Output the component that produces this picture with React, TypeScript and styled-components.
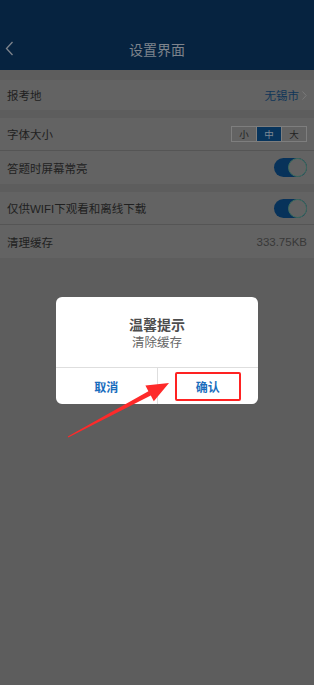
import React from 'react';
import styled, { createGlobalStyle } from 'styled-components';

const GlobalStyle = createGlobalStyle`
    html, body {
        margin: 0;
        padding: 0;
        background: #5d5d5d;
        font-family: "Liberation Sans", "Noto Sans CJK SC", sans-serif;
    }
`;

const Page = styled.div`
    position: relative;
    width: 314px;
    height: 685px;
    overflow: hidden;
    background: #5d5d5d;
`;

const Header = styled.div`
    height: 70px;
    background: #062340;
    display: flex;
    align-items: flex-end;
    justify-content: center;
    position: relative;
    box-sizing: border-box;
    padding-bottom: 12px;
`;

const Title = styled.div`
    color: #7e848c;
    font-size: 14px;
    line-height: 16px;
`;

const Back = styled.svg`
    position: absolute;
    left: 5px;
    bottom: 14px;
`;

const Group = styled.div<{ top: number }>`
    margin-top: ${p => p.top}px;
    background: #636363;
`;

const Row = styled.div<{ h?: number; last?: boolean }>`
    height: ${p => p.h ?? 33}px;
    box-sizing: border-box;
    display: flex;
    align-items: center;
    justify-content: space-between;
    padding: 0 7px;
    border-bottom: ${p => (p.last ? 'none' : '1px solid #555')};
    font-size: 11.5px;
    color: #1f1f1f;
`;

const Value = styled.span<{ blue?: boolean }>`
    color: ${p => (p.blue ? '#0f3558' : '#383838')};
    display: flex;
    align-items: center;
    gap: 3px;
    font-size: 11.5px;
`;

const Segments = styled.div`
    display: flex;
    border: 1px solid #7e7e7e;
    height: 16px;
    box-sizing: border-box;
`;

const Segment = styled.div<{ active?: boolean }>`
    width: 24px;
    display: flex;
    align-items: center;
    justify-content: center;
    font-size: 9.5px;
    color: ${p => (p.active ? '#7e8994' : '#222')};
    background: ${p => (p.active ? '#07345c' : 'transparent')};
    & + & {
        border-left: 1px solid #7e7e7e;
    }
`;

const Toggle = styled.div`
    width: 33px;
    height: 19px;
    border-radius: 10px;
    background: #07325a;
    position: relative;
    &::after {
        content: '';
        position: absolute;
        right: 0;
        top: 0;
        width: 17px;
        height: 17px;
        border-radius: 50%;
        background: #636363;
        border: 1px solid #3e6b5c;
    }
`;

const Overlay = styled.div`
    position: absolute;
    inset: 0;
    display: flex;
    justify-content: center;
    padding-top: 297px;
    box-sizing: border-box;
`;

const Dialog = styled.div`
    width: 202px;
    height: 107px;
    background: #fff;
    border-radius: 6px;
    display: flex;
    flex-direction: column;
`;

const DialogBody = styled.div`
    height: 71px;
    display: flex;
    flex-direction: column;
    align-items: center;
    padding-top: 19px;
    box-sizing: border-box;
    border-bottom: 1px solid #dedede;
`;

const DialogTitle = styled.div`
    font-size: 14px;
    font-weight: bold;
    color: #4d4d4d;
    line-height: 18px;
`;

const DialogText = styled.div`
    font-size: 12.5px;
    color: #666;
    line-height: 18px;
`;

const Buttons = styled.div`
    flex: 1;
    display: flex;
`;

const Btn = styled.div<{ boxed?: boolean }>`
    flex: 1;
    display: flex;
    align-items: center;
    justify-content: center;
    font-size: 12px;
    font-weight: bold;
    color: #1a6dbd;
    & + & {
        border-left: 1px solid #dedede;
    }
    span {
        display: flex;
        align-items: center;
        justify-content: center;
        width: 66px;
        height: 29px;
        box-sizing: border-box;
        border: ${p => (p.boxed ? '2.5px solid #fe2222' : 'none')};
        border-radius: 2px;
    }
`;

const Arrow = styled.svg`
    position: absolute;
    left: 0;
    top: 0;
`;

const App: React.FC = () => {
    return (
        <Page>
            <GlobalStyle />
            <Header>
                <Back width="9" height="15" viewBox="0 0 9 15">
                    <path d="M7.5 1 L1.5 7.5 L7.5 14" fill="none" stroke="#7e848c" strokeWidth="1.3" />
                </Back>
                <Title>设置界面</Title>
            </Header>
            <Group top={10}>
                <Row h={30} last>
                    报考地
                    <Value blue>
                        无锡市
                        <svg width="5" height="9" viewBox="0 0 5 9">
                            <path d="M0.5 0.5 L4.2 4.5 L0.5 8.5" fill="none" stroke="#7a7a7a" strokeWidth="1" />
                        </svg>
                    </Value>
                </Row>
            </Group>
            <Group top={8}>
                <Row>
                    字体大小
                    <Segments>
                        <Segment>小</Segment>
                        <Segment active>中</Segment>
                        <Segment>大</Segment>
                    </Segments>
                </Row>
                <Row last>
                    答题时屏幕常亮
                    <Toggle />
                </Row>
            </Group>
            <Group top={8}>
                <Row>
                    仅供WIFI下观看和离线下载
                    <Toggle />
                </Row>
                <Row last>
                    清理缓存
                    <Value>333.75KB</Value>
                </Row>
            </Group>
            <Overlay>
                <Dialog>
                    <DialogBody>
                        <DialogTitle>温馨提示</DialogTitle>
                        <DialogText>清除缓存</DialogText>
                    </DialogBody>
                    <Buttons>
                        <Btn>取消</Btn>
                        <Btn boxed>
                            <span>确认</span>
                        </Btn>
                    </Buttons>
                </Dialog>
            </Overlay>
            <Arrow width="314" height="685" viewBox="0 0 314 685">
                <polygon
                    points="67.8,436.6 148.4,391.2 145.4,385.5 169,383 153.8,401.3 150.8,395.6 68.2,437.4"
                    fill="#fe2a2a"
                />
            </Arrow>
        </Page>
    );
};

export default App;
